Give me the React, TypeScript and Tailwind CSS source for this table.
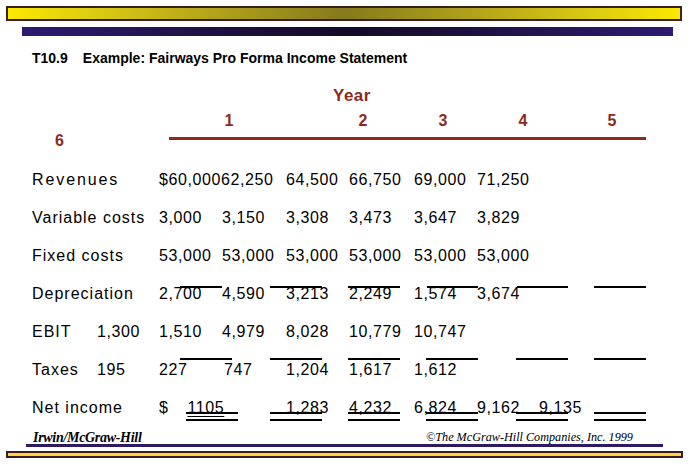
const cols = 'grid grid-cols-[32px_65px_62px_63px_64px_63px_65px_63px_62px_1fr]';
const row = `${cols} relative h-[38px] items-center text-[16px] leading-[18px] text-black`;
const label = 'tracking-[1px] whitespace-nowrap';
const num = 'tracking-[0.6px] whitespace-nowrap';

// thin black rules drawn across the figures, as on the original slide
function Rules({ className, children }: { className: string; children: React.ReactNode }) {
    return <div className={`pointer-events-none absolute left-0 flex ${className}`}>{children}</div>;
}

export default function App() {
    return (
        <div className="relative h-[475px] w-[691px] overflow-hidden bg-white pt-[6px] font-['Liberation_Sans',Arial,sans-serif]">
            {/* top bars */}
            <div className="ml-[6px] h-[15px] w-[676px] border-2 border-[#3d1f18] bg-gradient-to-r from-[#fbe900] via-[#857a1c] to-[#fbe900]" />
            <div className="ml-[22px] mt-[6px] h-[9px] w-[651px] bg-gradient-to-r from-[#2f1a72] via-[#140a26] to-[#2f1a72]" />

            <div className="ml-[32px] mt-[14px] flex text-[14px] font-bold leading-[16px] text-black">
                <span>T10.9</span>
                <span className="ml-[15px]">Example: Fairways Pro Forma Income Statement</span>
            </div>

            {/* header */}
            <div className="ml-[333px] mt-[20px] text-[17px] font-bold leading-[20px] tracking-[0.5px] text-[#8b2b1d]">
                Year
            </div>
            <div className="mt-[6px] flex text-[16px] font-bold leading-[18px] text-[#8b2b1d]">
                <span className="ml-[219px] w-[20px] text-center">1</span>
                <span className="ml-[114px] w-[20px] text-center">2</span>
                <span className="ml-[60px] w-[20px] text-center">3</span>
                <span className="ml-[60px] w-[20px] text-center">4</span>
                <span className="ml-[69px] w-[20px] text-center">5</span>
            </div>
            <div className="mt-[2px] flex h-[18px] items-center text-[16px] font-bold leading-[18px] text-[#8b2b1d]">
                <span className="ml-[55px] w-[10px]">6</span>
                <span className="ml-[104px] mt-[-6px] h-[3px] w-[477px] bg-[#8b2b1d]" />
            </div>

            {/* rows */}
            <div className="mt-[11px]">
                <div className={row}>
                    <span className="col-span-2 col-start-2 whitespace-nowrap tracking-[1.9px]">Revenues</span>
                    <span className={`col-span-2 col-start-4 ${num}`}>$60,00062,250</span>
                    <span className={`col-start-6 ${num}`}>64,500</span>
                    <span className={`col-start-7 ${num}`}>66,750</span>
                    <span className={`col-start-8 ${num}`}>69,000</span>
                    <span className={`col-start-9 ${num}`}>71,250</span>
                </div>

                <div className={row}>
                    <span className={`col-span-2 col-start-2 ${label}`}>Variable costs</span>
                    <span className={`col-start-4 ${num}`}>3,000</span>
                    <span className={`col-start-5 ${num}`}>3,150</span>
                    <span className={`col-start-6 ${num}`}>3,308</span>
                    <span className={`col-start-7 ${num}`}>3,473</span>
                    <span className={`col-start-8 ${num}`}>3,647</span>
                    <span className={`col-start-9 ${num}`}>3,829</span>
                </div>

                <div className={row}>
                    <span className={`col-span-2 col-start-2 ${label}`}>Fixed costs</span>
                    <span className={`col-start-4 ${num}`}>53,000</span>
                    <span className={`col-start-5 ${num}`}>53,000</span>
                    <span className={`col-start-6 ${num}`}>53,000</span>
                    <span className={`col-start-7 ${num}`}>53,000</span>
                    <span className={`col-start-8 ${num}`}>53,000</span>
                    <span className={`col-start-9 ${num}`}>53,000</span>
                </div>

                <div className={row}>
                    <Rules className="top-[11px]">
                        <span className="ml-[180px] h-[2px] w-[42px] bg-black" />
                        <span className="ml-[48px] h-[2px] w-[52px] bg-black" />
                        <span className="ml-[26px] h-[2px] w-[52px] bg-black" />
                        <span className="ml-[27px] h-[2px] w-[51px] bg-black" />
                        <span className="ml-[39px] h-[2px] w-[51px] bg-black" />
                        <span className="ml-[26px] h-[2px] w-[52px] bg-black" />
                    </Rules>
                    <span className={`col-span-2 col-start-2 ${label}`}>Depreciation</span>
                    <span className={`col-start-4 ${num}`}>2,700</span>
                    <span className={`col-start-5 ${num}`}>4,590</span>
                    <span className={`col-start-6 ${num}`}>3,213</span>
                    <span className={`col-start-7 ${num}`}>2,249</span>
                    <span className={`col-start-8 ${num}`}>1,574</span>
                    <span className={`col-start-9 ${num}`}>3,674</span>
                </div>

                <div className={row}>
                    <span className={`col-start-2 ${label}`}>EBIT</span>
                    <span className={`col-start-3 ${num}`}>1,300</span>
                    <span className={`col-start-4 ${num}`}>1,510</span>
                    <span className={`col-start-5 ${num}`}>4,979</span>
                    <span className={`col-start-6 ${num}`}>8,028</span>
                    <span className={`col-start-7 ${num}`}>10,779</span>
                    <span className={`col-start-8 ${num}`}>10,747</span>
                </div>

                <div className={row}>
                    <Rules className="top-[7px] gap-[26px] pl-[180px]">
                        <span className="mr-[12px] h-[2px] w-[52px] bg-black" />
                        <span className="h-[2px] w-[52px] bg-black" />
                        <span className="h-[2px] w-[52px] bg-black" />
                        <span className="mr-[12px] h-[2px] w-[52px] bg-black" />
                        <span className="h-[2px] w-[52px] bg-black" />
                        <span className="h-[2px] w-[52px] bg-black" />
                    </Rules>
                    <span className={`col-start-2 ${label}`}>Taxes</span>
                    <span className={`col-start-3 ${num}`}>195</span>
                    <span className={`col-start-4 ${num}`}>227</span>
                    <span className={`col-start-5 pl-[2px] ${num}`}>747</span>
                    <span className={`col-start-6 ${num}`}>1,204</span>
                    <span className={`col-start-7 ${num}`}>1,617</span>
                    <span className={`col-start-8 ${num}`}>1,612</span>
                </div>

                <div className={row}>
                    <Rules className="top-[23px] gap-[26px] pl-[186px]">
                        <span className="mr-[6px] h-[9px] w-[52px] border-y-2 border-black" />
                        <span className="h-[9px] w-[52px] border-y-2 border-black" />
                        <span className="h-[9px] w-[52px] border-y-2 border-black" />
                        <span className="mr-[12px] h-[9px] w-[52px] border-y-2 border-black" />
                        <span className="h-[9px] w-[52px] border-y-2 border-black" />
                        <span className="h-[9px] w-[52px] border-y-2 border-black" />
                    </Rules>
                    <span className={`col-span-2 col-start-2 ${label}`}>Net income</span>
                    <span className={`col-start-4 ${num}`}>
                        $<span className="ml-[19px] underline underline-offset-[3px]">1105</span>
                    </span>
                    <span className={`col-start-6 ${num}`}>1,283</span>
                    <span className={`col-start-7 ${num}`}>4,232</span>
                    <span className={`col-start-8 ${num}`}>6,824</span>
                    <span className={`col-start-9 ${num}`}>9,162</span>
                    <span className={`col-start-10 ${num}`}>9,135</span>
                </div>
            </div>

            {/* footer */}
            <div className="mt-[4px] flex pl-[33px] font-['Liberation_Serif','Times_New_Roman',serif] leading-[13px] text-black">
                <span className="w-[393px] text-[14px] font-bold italic tracking-[-0.3px]">Irwin/McGraw-Hill</span>
                <span className="text-[12.2px] italic">©The McGraw-Hill Companies, Inc. 1999</span>
            </div>
            <div className="ml-[26px] h-[3px] w-[637px] bg-[#2f1a60]" />
            <div className="ml-[6px] mt-[4px] h-[7px] w-[677px] border-2 border-[#3a1c2a] bg-[#fcd43c]" />
        </div>
    );
}
